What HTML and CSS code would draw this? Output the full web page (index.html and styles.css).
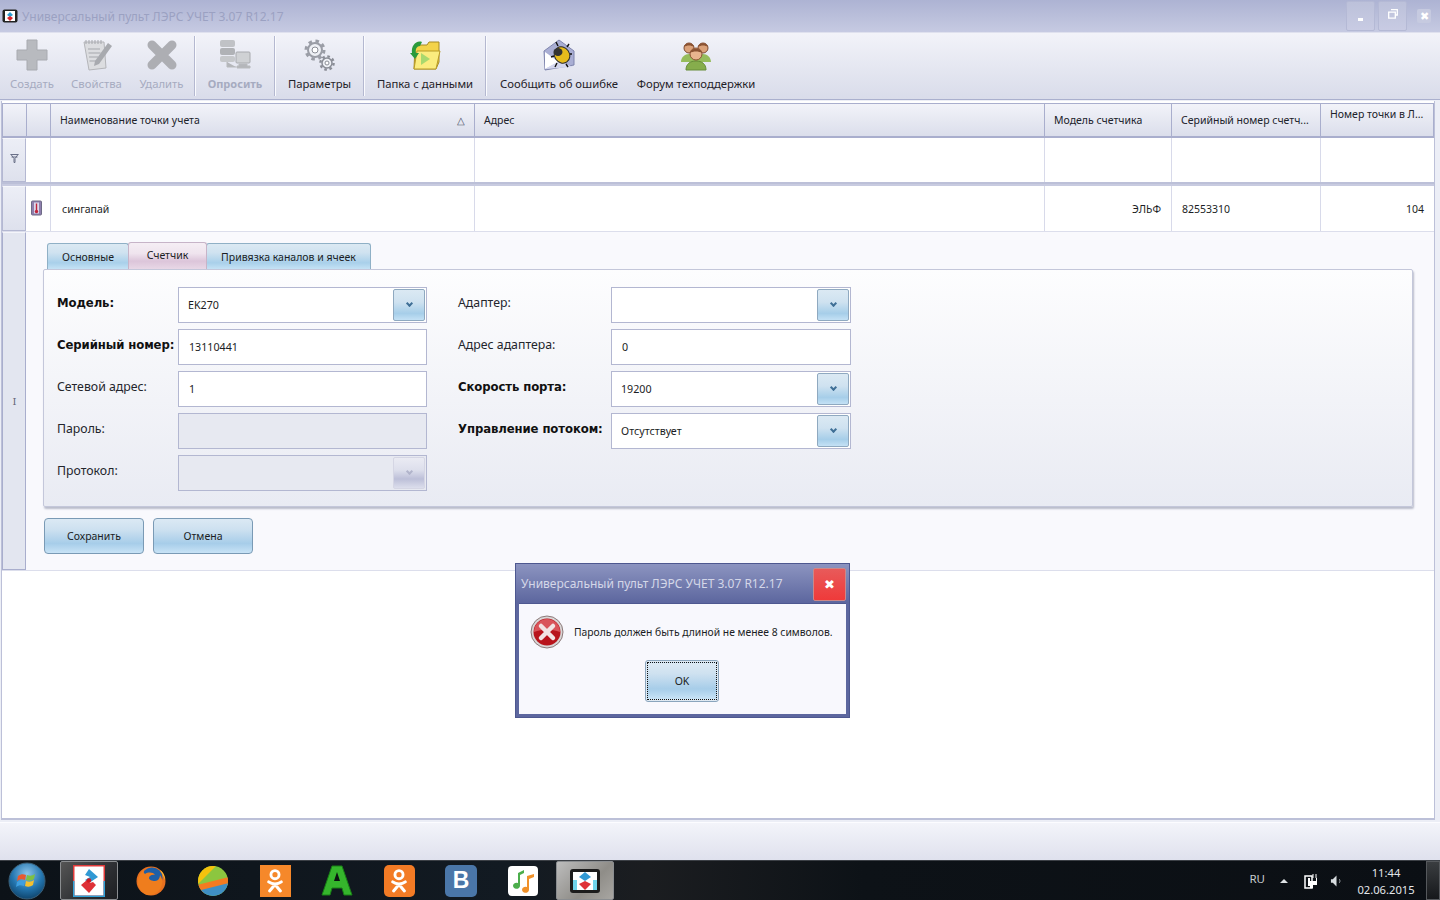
FILE: index.html
```html
<!DOCTYPE html>
<html lang="ru">
<head>
<meta charset="utf-8">
<title>Универсальный пульт ЛЭРС УЧЕТ 3.07 R12.17</title>
<link rel="stylesheet" href="styles.css">
</head>
<body>
<div class="window">
  <header class="titlebar">
    <svg class="app-ico" viewBox="0 0 16 14"><rect x=".5" y=".5" width="15" height="13" rx="2" fill="#222"/><rect x="3" y="2" width="10" height="10" fill="#fff"/><path d="M8 3l3 3-3 2-3-2z" fill="#2b9bd0"/><path d="M8 7l3 2-3 3-3-3z" fill="#d8232a"/></svg>
    <span class="title-text">Универсальный пульт ЛЭРС УЧЕТ 3.07 R12.17</span>
    <div class="win-btns">
      <div class="win-btn"><span class="min-mark"></span></div>
      <div class="win-btn"><svg class="restore" viewBox="0 0 10 10"><path d="M3 .7h6.3V6H7.5M.7 3.2h6.6v6H.7z" fill="none" stroke="#fff" stroke-width="1.3"/></svg></div>
      <div class="win-close">✖</div>
    </div>
  </header>

  <nav class="toolbar">
    <div class="tool off">
      <svg class="tool-ico" viewBox="0 0 32 32"><path d="M11 1h10v10h10v10H21v10H11V21H1V11h10z" fill="#b8babf" stroke="#a8aab0" stroke-linejoin="round"/></svg>
      <span>Создать</span>
    </div>
    <div class="tool off">
      <svg class="tool-ico" viewBox="0 0 32 32"><path d="M3 3l20 0 2 26-17 2z" fill="#dcdde0" stroke="#b4b5b9"/><path d="M5 1v4M8 1v4M11 1v4M14 1v4M17 1v4M20 1v4M7 10h12M7.500 14h12M8 18h9M8.500 22h7" stroke="#a5a7ac"/><path d="M14 22L27 4l4 3-13 18-5 2z" fill="#a8aaaf"/></svg>
      <span>Свойства</span>
    </div>
    <div class="tool off">
      <svg class="tool-ico" viewBox="0 0 32 32"><path d="M6 6L26 26M26 6L6 26" stroke="#adaeb3" stroke-width="9" stroke-linecap="round"/></svg>
      <span>Удалить</span>
    </div>
    <div class="tool-sep"></div>
    <div class="tool off wide-bold">
      <svg class="tool-ico" viewBox="0 0 32 32"><rect x="1" y="1" width="15" height="7" rx="2" fill="#c0c2c6"/><rect x="1" y="9" width="15" height="7" rx="2" fill="#b0b2b6"/><rect x="1" y="17" width="15" height="6" rx="2" fill="#c6c8cb"/><rect x="17" y="13" width="14" height="11" rx="1" fill="#cfd1d4" stroke="#a8aaae"/><path d="M20 25h8v2h3v2H18v-2h2zM8 23v5h9" fill="#b4b6ba" stroke="#b8babd"/></svg>
      <span>Опросить</span>
    </div>
    <div class="tool-sep"></div>
    <div class="tool">
      <svg class="tool-ico" viewBox="0 0 32 32"><circle cx="11" cy="11" r="7" fill="#eef0f5" stroke="#9a9da6" stroke-width="2"/><circle cx="11" cy="11" r="9" fill="none" stroke="#9a9da6" stroke-width="3" stroke-dasharray="3.5 3.6"/><circle cx="11" cy="11" r="3" fill="#fff" stroke="#8a8d96"/><circle cx="23" cy="24" r="5" fill="#eef0f5" stroke="#8a8d96" stroke-width="1.5"/><circle cx="23" cy="24" r="6.600" fill="none" stroke="#8a8d96" stroke-width="2.400" stroke-dasharray="2.600 2.600"/><circle cx="23" cy="24" r="2" fill="#fff" stroke="#8a8d96"/></svg>
      <span>Параметры</span>
    </div>
    <div class="tool-sep"></div>
    <div class="tool">
      <svg class="tool-ico" viewBox="0 0 32 32"><path d="M6 6h12l2-3h10v20l-3 7H5z" fill="#f3d34a" stroke="#a58a24"/><path d="M8 12h23l-4 18H5z" fill="#fbec7e" stroke="#b89a26"/><path d="M12 14l9 6-9 6z" fill="#a8d86e"/><path d="M3 14C2 7 7 1 13 3l-2 4c-3 0-5 3-4 7l3 0-4 6-5-6z" fill="#2a9a3c"/></svg>
      <span>Папка с данными</span>
    </div>
    <div class="tool-sep"></div>
    <div class="tool">
      <svg class="tool-ico" viewBox="0 0 32 32"><path d="M1 12L16 1l15 11v14L2 31z" fill="#a9aed4" stroke="#7f85ad"/><path d="M2 13l14 10L2 30z" fill="#fff"/><path d="M2 30l14-8 14 6z" fill="#d4d7ee"/><ellipse cx="19" cy="16" rx="7.500" ry="8.500" fill="#e6bb1c" stroke="#2b2b2b" transform="rotate(-35 19 16)"/><ellipse cx="15" cy="13" rx="4.500" ry="4" fill="#333"/><path d="M15 7l-2-4M24 8l2-3M11 17l-3 1M27 15h2M14 24l-2 4M23 25l2 3" stroke="#111" stroke-width="1.400"/></svg>
      <span>Сообщить об ошибке</span>
    </div>
    <div class="tool">
      <svg class="tool-ico" viewBox="0 0 32 32"><circle cx="9" cy="9" r="5" fill="#dba27a" stroke="#7d4a30"/><path d="M4 8c1-5 9-5 10 0-3-2-7-2-10 0z" fill="#8a5232"/><circle cx="23" cy="9" r="5" fill="#dba27a" stroke="#7d4a30"/><path d="M18 8c1-5 9-5 10 0-3-2-7-2-10 0z" fill="#8a5232"/><path d="M1 23c0-5 4-8 8-8s8 3 8 8zM15 23c0-5 4-8 8-8s8 3 8 8z" fill="#96bc5c"/><path d="M6 31c0-6 4-9 10-9s10 3 10 9z" fill="#86ad4c" stroke="#668c38"/><circle cx="16" cy="15" r="6" fill="#e8b48e" stroke="#8a5232"/><path d="M10 14c1-6 11-6 12 0-3-2-9-2-12 0z" fill="#8a5232"/></svg>
      <span>Форум техподдержки</span>
    </div>
  </nav>

  <main class="grid-wrap">
    <div class="row head-row">
      <div class="hcell"></div>
      <div class="hcell"></div>
      <div class="hcell sortable">Наименование точки учета<span class="sort-tri">△</span></div>
      <div class="hcell">Адрес</div>
      <div class="hcell">Модель счетчика</div>
      <div class="hcell">Серийный номер счетч...</div>
      <div class="hcell hcell-top">Номер точки в Л...</div>
    </div>
    <div class="row filter-row">
      <div class="side"><svg class="funnel" viewBox="0 0 9 9"><path d="M.5 .5h8M1 .5l3 4v4h1v-4l3-4M1.500 3h6" fill="none" stroke="#6a7088"/></svg></div>
      <div class="cell"></div><div class="cell"></div><div class="cell"></div><div class="cell"></div><div class="cell"></div><div class="cell"></div>
    </div>
    <div class="grid-sep"></div>
    <div class="row data-row">
      <div class="side"></div>
      <div class="cell thermo-cell"><svg class="thermo" viewBox="0 0 11 15"><rect x=".5" y=".5" width="10" height="14" rx="1" fill="#8e7fae" stroke="#6e6a86"/><rect x="3" y="2" width="5" height="11" fill="#dcd8ea"/><path d="M5.500 3v7" stroke="#c0243a" stroke-width="1.400"/><circle cx="5.500" cy="11" r="1.700" fill="#c0243a"/></svg></div>
      <div class="cell pad-name">сингапай</div>
      <div class="cell"></div>
      <div class="cell right">ЭЛЬФ</div>
      <div class="cell pad-serial">82553310</div>
      <div class="cell right">104</div>
    </div>
    <div class="detail-row">
      <div class="detail-side"><span class="cursor-i">I</span></div>
      <div class="detail">
        <div class="tabs">
          <div class="tab tab-a">Основные</div>
          <div class="tab tab-b active">Счетчик</div>
          <div class="tab tab-c">Привязка каналов и ячеек</div>
        </div>
        <div class="panel">
          <div class="form-col col-left">
            <div class="frow"><label class="strong">Модель:</label><div class="field combo"><span class="val val-combo">EK270</span><span class="drop"><i></i></span></div></div>
            <div class="frow"><label class="strong">Серийный номер:</label><div class="field"><span class="val">13110441</span></div></div>
            <div class="frow"><label>Сетевой адрес:</label><div class="field"><span class="val">1</span></div></div>
            <div class="frow"><label>Пароль:</label><div class="field disabled"></div></div>
            <div class="frow"><label>Протокол:</label><div class="field combo disabled"><span class="drop"><i></i></span></div></div>
          </div>
          <div class="form-col col-right">
            <div class="frow"><label>Адаптер:</label><div class="field combo"><span class="drop"><i></i></span></div></div>
            <div class="frow"><label>Адрес адаптера:</label><div class="field"><span class="val">0</span></div></div>
            <div class="frow"><label class="strong">Скорость порта:</label><div class="field combo"><span class="val val-combo">19200</span><span class="drop"><i></i></span></div></div>
            <div class="frow"><label class="strong">Управление потоком:</label><div class="field combo"><span class="val val-combo">Отсутствует</span><span class="drop"><i></i></span></div></div>
          </div>
        </div>
        <div class="actions">
          <div class="btn">Сохранить</div>
          <div class="btn">Отмена</div>
        </div>
      </div>
    </div>
  </main>
  <div class="statusbar"></div>
</div>

<section class="dialog">
  <div class="dlg-title"><span>Универсальный пульт ЛЭРС УЧЕТ 3.07 R12.17</span><div class="dlg-close">✖</div></div>
  <div class="dlg-body">
    <div class="dlg-msg">
      <svg class="err-ico" viewBox="0 0 34 34"><circle cx="17" cy="17" r="16" fill="#d9d6d6" stroke="#8c7a7a"/><circle cx="17" cy="17" r="13.500" fill="#b8141c"/><path d="M4 17a13 13 0 0 1 26 0c-8-3-18-3-26 0z" fill="#d9545a"/><path d="M11 11L23 23M23 11L11 23" stroke="#f1e4e4" stroke-width="4.500" stroke-linecap="round"/></svg>
      <span>Пароль должен быть длиной не менее 8 символов.</span>
    </div>
    <div class="dlg-ok"><div class="ok-inner">OK</div></div>
  </div>
</section>

<footer class="taskbar">
  <svg class="orb" viewBox="0 0 38 38"><defs><radialGradient id="orbg" cx="50%" cy="30%" r="75%"><stop offset="0" stop-color="#8cc4ea"/><stop offset=".55" stop-color="#2476b0"/><stop offset="1" stop-color="#0c3d62"/></radialGradient></defs><circle cx="19" cy="19" r="18" fill="url(#orbg)" stroke="#3a5f78"/><path d="M10 14c3-2 5-2 8-1l-1 5c-3-1-5-1-8 1z" fill="#e9582f"/><path d="M19 13c3 1 5 1 8-1l-1 5c-3 2-5 2-8 1z" fill="#7ec043"/><path d="M9 20c3-2 5-2 8-1l-1 5c-3-1-5-1-8 1z" fill="#3f9fe0"/><path d="M18 19c3 1 5 1 8-1l-1 5c-3 2-5 2-8 1z" fill="#f5c02f"/></svg>
  <div class="slot pinned-active">
    <svg class="tb-ico" viewBox="0 0 32 32"><rect x=".75" y=".75" width="30.500" height="30.500" fill="#fff" stroke="#e23a3a" stroke-width="1.500"/><path d="M.75 16v15.250h30.500V16" fill="none" stroke="#2fa3d8" stroke-width="1.500"/><path d="M16 4l9 8-9 6-4-3 5-3-5-2z" fill="#3199d4"/><path d="M16 28L8 20l6-5 3 3 3-1 3 3z" fill="#de3137"/><circle cx="16" cy="15.500" r="2.300" fill="#d01a22"/></svg>
  </div>
  <div class="slot"><svg class="tb-ico" viewBox="0 0 32 32"><circle cx="16" cy="16" r="14.500" fill="#e8701f"/><circle cx="17" cy="13" r="10.500" fill="#1d5fa8"/><path d="M3 15c1-6 4-9 6-11-1 3 0 4 1 5 3-2 8-2 10 1-3-1-6 1-6 3s3 3 6 3c3 0 5-3 5-6 2 3 3 6 2 9-1 7-7 11-13 11C8 30 2 23 3 15z" fill="#ef7d1d"/><path d="M25 5c3 2 5 6 5 10-1-3-2-5-5-10z" fill="#f6c637"/></svg></div>
  <div class="slot"><svg class="tb-ico" viewBox="0 0 32 32"><defs><clipPath id="ballc"><circle cx="16" cy="16" r="15"/></clipPath></defs><g clip-path="url(#ballc)"><rect width="32" height="32" fill="#8cc63f"/><path d="M0 0h20L0 20z" fill="#f4c20d"/><path d="M0 20L32 12v8L0 30z" fill="#f47b20"/><path d="M0 26l32-8v14H0z" fill="#3f8fc4"/></g></svg></div>
  <div class="slot"><div class="ok-sq"><svg class="ok-glyph" viewBox="0 0 20 28"><circle cx="10" cy="7" r="4.500" fill="none" stroke="#fff" stroke-width="3.200"/><path d="M3 15c4 3 10 3 14 0M10 18l-6 7M10 18l6 7" fill="none" stroke="#fff" stroke-width="3.400" stroke-linecap="round"/></svg></div></div>
  <div class="slot"><svg class="tb-ico" viewBox="0 0 32 32"><path d="M11 1h10l10 29h-8l-2-7H11l-2 7H1z" fill="#35b52c" stroke="#188016"/><path d="M13 16h6l-3-9z" fill="#0a1310"/></svg></div>
  <div class="slot"><div class="ok-sq round"><svg class="ok-glyph" viewBox="0 0 20 28"><circle cx="10" cy="7" r="4.500" fill="none" stroke="#fff" stroke-width="3.200"/><path d="M3 15c4 3 10 3 14 0M10 18l-6 7M10 18l6 7" fill="none" stroke="#fff" stroke-width="3.400" stroke-linecap="round"/></svg></div></div>
  <div class="slot"><div class="vk-sq">В</div></div>
  <div class="slot"><svg class="tb-ico music" viewBox="0 0 30 30"><rect width="30" height="30" rx="4" fill="#fff"/><path d="M10 7l6-3v3l-4 2v11a3.500 3 0 1 1-2-3z" fill="#4cae4c"/><path d="M19 10l7-2v3l-5 2v11a3.500 3 0 1 1-2-3z" fill="#f0912a"/></svg></div>
  <div class="slot pinned-current">
    <svg class="tb-ico-s" viewBox="0 0 30 24"><rect width="30" height="24" rx="3" fill="#1c1c1c"/><rect x="3" y="3" width="24" height="18" fill="#fff"/><rect x="3" y="11" width="4" height="10" fill="#6fd3ea"/><rect x="23" y="11" width="4" height="10" fill="#6fd3ea"/><path d="M15 3l6 5-6 4-6-4z" fill="#3199d4"/><path d="M15 21l-6-6 6-3 6 3z" fill="#de3137"/></svg>
  </div>
  <div class="tray">
    <span class="lang">RU</span>
    <span class="tray-up"></span>
    <svg class="tray-ico" viewBox="0 0 14 16"><path d="M1 3h7v12H1z" fill="none" stroke="#fff" stroke-width="1.500"/><path d="M4 5h2v8H4zM6 8h6V5h1v7H9v3H6z" fill="#fff"/><path d="M9 1v4M12 1v4" stroke="#fff"/></svg>
    <svg class="tray-ico speaker" viewBox="0 0 14 14"><path d="M1 5h2l4-4v12l-4-4H1z" fill="#d8dde0"/><path d="M10 5c1 1 1 3 0 4" stroke="#9aa0a4" fill="none"/></svg>
    <div class="clock"><span>11:44</span><span>02.06.2015</span></div>
    <div class="show-desktop"></div>
  </div>
</footer>
</body>
</html>
```

FILE: styles.css
```css
* { box-sizing: border-box; }
html, body { margin: 0; padding: 0; }
body {
  width: 1440px;
  height: 900px;
  overflow: hidden;
  position: relative;
  background: #eceef6;
  font-family: "Noto Sans", "Open Sans", sans-serif;
  font-size: 10.500px;
  color: #1b1d24;
}
.window { height: 860px; display: flex; flex-direction: column; }

/* title bar */
.titlebar {
  height: 33px;
  flex: none;
  display: flex;
  align-items: center;
  padding-left: 2px;
  background: linear-gradient(#adb3d3, #c6cae2);
  border-bottom: 1px solid #dfe1ee;
}
.app-ico { width: 16px; height: 14px; margin-right: 4px; margin-top: -1px; }
.title-text { font-size: 12px; color: #9ba1c2; }
.win-btns { margin-left: auto; display: flex; align-items: flex-start; height: 33px; }
.win-btn {
  width: 29px; height: 30px; margin-right: 3px; margin-top: 1px;
  border: 1px solid #b4b9d5; border-radius: 2px;
  background: linear-gradient(#bcc1da, #c8cbe3);
  display: flex; align-items: center; justify-content: center;
}
.min-mark { width: 5px; height: 3px; background: #fff; margin-top: 8px; }
.restore { width: 10px; height: 10px; margin-top: -3px; }
.win-close {
  width: 14px; height: 14px; margin: 9px 9px 0 7px;
  background: #c6cae0; border-radius: 2px; color: #fff;
  font-size: 11px; line-height: 14px; text-align: center;
}

/* toolbar */
.toolbar {
  height: 67px;
  flex: none;
  display: grid;
  grid-template-columns: 64px 65px 65px 2px 78px 2px 87px 2px 120px 2px 144px 130px;
  background: linear-gradient(#f2f3f9, #d9dcea);
  border-bottom: 1px solid #aab0ce;
}
.tool { display: flex; flex-direction: column; align-items: center; font-size: 11.300px; color: #1f2128; white-space: nowrap; }
.tool span { margin-top: 4px; line-height: 17px; }
.tool-ico { width: 32px; height: 32px; margin-top: 6px; display: block; flex: none; }
.tool.off { color: #a6abc0; }
.wide-bold span { font-weight: 700; font-size: 11px; }
.tool-sep { margin: 3px 0; border-left: 1px solid #b4b8d0; border-right: 1px solid #fafbfe; }

/* data grid */
.grid-wrap {
  flex: 1;
  background: #fff;
  margin: 1px 5px 2px 1px;
  padding: 2px 0 0 0;
  border: 1px solid #bcc0d8;
  border-bottom-width: 2px;
  border-top: 0;
}
.row { display: grid; grid-template-columns: 24px 24px 424px 570px 127px 149px 114px; }
.head-row { height: 35px; }
.hcell {
  display: flex; align-items: center;
  padding: 0 0 0 9px;
  background: linear-gradient(#f2f3f9, #dbdeeb);
  border: 1px solid #a9aecd;
  border-right-width: 0;
  border-bottom-width: 2px;
  white-space: nowrap;
  color: #20222a;
}
.hcell:last-child { border-right-width: 1px; }
.hcell-top { align-items: flex-start; padding-top: 3px; }
.sortable { justify-content: space-between; padding-right: 9px; }
.sort-tri { color: #4a5068; font-size: 10px; }
.filter-row { height: 44px; }
.side {
  display: flex; align-items: center; justify-content: center;
  padding-left: 1px;
  background: linear-gradient(#eceef6, #dee1ed);
  border: 1px solid #b4b8d2;
  border-top-color: #f6f7fb;
}
.funnel { width: 9px; height: 9px; margin-top: -3px; }
.cell {
  border-left: 1px solid #d8daea;
  display: flex; align-items: center;
  white-space: nowrap;
}
.side + .cell { border-left: 0; }
.grid-sep { height: 4px; background: #fff; border-top: 2px solid #bcc0d8; border-bottom: 2px solid #c8cbe0; }
.data-row { height: 46px; border-bottom: 1px solid #dcdeec; }
.thermo-cell { padding-left: 5px; }
.thermo { width: 11px; height: 16px; margin-top: -1px; }
.pad-name { padding-left: 11px; }
.pad-serial { padding-left: 10px; }
.right { justify-content: flex-end; padding-right: 10px; }

/* detail row */
.detail-row { display: flex; height: 339px; border-bottom: 1px solid #dcdeec; }
.detail-side {
  width: 24px; flex: none;
  padding-left: 1px;
  background: #e3e6f0;
  border: 1px solid #a9aecd;
  border-top-color: #f4f5fa;
  display: flex; align-items: center; justify-content: center;
}
.cursor-i { font-family: "DejaVu Serif", serif; font-size: 10px; color: #667; }
.detail { flex: 1; background: #f9f9fd; padding: 10px 21px 0 17px; }
.tabs { display: flex; height: 27px; padding-left: 4px; align-items: flex-end; }
.tab {
  height: 26px;
  display: flex; align-items: center; justify-content: center;
  border: 1px solid #8fb0c6;
  border-bottom: 0;
  border-radius: 3px 3px 0 0;
  background: linear-gradient(#dbe9f3, #cfe2f0 35%, #a9d0ea 75%, #c5e2f5);
  margin-right: -1px;
}
.tab-a { width: 82px; }
.tab-b { width: 79px; }
.tab-c { width: 165px; }
.tab.active {
  height: 27px;
  padding-bottom: 2px;
  border-color: #c7b4c8;
  background: linear-gradient(#f5eef4, #efe4ee 40%, #dcc5da 70%, #e8d8e6);
  position: relative;
  z-index: 1;
}
.panel {
  height: 238px;
  display: flex;
  padding: 17px 0 0 13px;
  background: linear-gradient(#fdfdfe, #e9ebf3);
  border: 1px solid #c4c7da;
  border-radius: 2px;
  box-shadow: 1px 2px 2px #b9bccb;
}
.form-col { display: flex; flex-direction: column; gap: 6px; }
.col-left { --label-w: 121px; --field-w: 249px; margin-right: 31px; }
.col-right { --label-w: 153px; --field-w: 240px; }
.frow { display: flex; height: 36px; }
label {
  width: var(--label-w); flex: none;
  font-size: 12.300px; line-height: 16px; padding-top: 8px;
  white-space: nowrap;
  color: #23252c;
}
label.strong { font-family: "DejaVu Sans", sans-serif; font-weight: 700; font-size: 11.700px; letter-spacing: -.1px; color: #111; }
.field {
  width: var(--field-w); flex: none;
  position: relative;
  display: flex; align-items: center;
  background: #fff;
  border: 1px solid #b3b7d1;
}
.field.disabled { background: #e7e9f1; }
.val { padding: 0 0 1px 10px; font-size: 10.700px; }
.val-combo { padding-left: 9px; }
.drop {
  position: absolute; top: 1px; right: 1px;
  width: 32px; height: 32px;
  border: 1px solid #8fa9c0; border-radius: 2px;
  background: linear-gradient(#dbe9f3, #cfe2f0 40%, #a6cee9 78%, #c4e1f5);
  display: flex; align-items: center; justify-content: center;
}
.drop i {
  width: 5px; height: 5px; margin-top: -3px;
  border-right: 2px solid #3f6f96; border-bottom: 2px solid #3f6f96;
  transform: rotate(45deg);
}
.disabled .drop { border-color: #d5d6e4; background: linear-gradient(#eaebf3, #dddfec 40%, #bcbfd8 70%, #dcdeec); }
.disabled .drop i { border-color: #b1b4cb; }
.actions { display: flex; gap: 9px; margin: 11px 0 0 1px; }
.btn {
  width: 100px; height: 36px;
  display: flex; align-items: center; justify-content: center;
  border: 1px solid #7a9ab5; border-radius: 4px;
  background: linear-gradient(#dbe9f4, #cee1f0 30%, #a7cde9 72%, #c8e3f6);
}

.statusbar {
  height: 38px; flex: none;
  background: linear-gradient(#f3f4fa, #dfe1ed);
  border-top: 1px solid #fcfcff;
}

/* dialog */
.dialog {
  position: absolute; left: 515px; top: 563px;
  width: 335px; height: 155px;
  padding: 0 3px 3px;
  background: linear-gradient(#8c94c0, #5d679f 25%, #5d679f);
  border: 1px solid #4e5890;
  display: flex; flex-direction: column;
}
.dlg-title {
  height: 39px; flex: none;
  display: flex; align-items: center; justify-content: space-between;
  padding-left: 2px;
  color: #d4d7e8;
  font-size: 12px;
}
.dlg-close {
  width: 33px; height: 33px; margin-top: 1px;
  border: 1px solid #c88; border-radius: 2px;
  background: linear-gradient(#e85a5a, #ef3a3a);
  color: #fff; font-size: 13px; line-height: 30px; text-align: center;
}
.dlg-body { flex: 1; background: #f8f8fd; border-top: 1px solid #4e5890; }
.dlg-msg { display: flex; align-items: center; height: 56px; padding-left: 11px; white-space: nowrap; font-size: 10.350px; }
.err-ico { width: 34px; height: 34px; margin-right: 10px; flex: none; }
.dlg-ok {
  width: 74px; height: 42px; margin: 0 0 0 126px;
  border: 1px solid #8aa5bd; border-radius: 3px; padding: 1px;
  background: #dfe9f2;
}
.ok-inner {
  height: 100%;
  display: flex; align-items: center; justify-content: center;
  border: 1px dotted #111;
  background: linear-gradient(#dce9f4, #cee1f0 30%, #a7cde9 72%, #c8e3f6);
}

/* taskbar */
.taskbar {
  position: absolute; left: 0; right: 0; top: 860px; height: 40px;
  display: flex; align-items: center;
  padding-left: 8px;
  background: linear-gradient(90deg, #0c1218, #121a22 35%, #1b1d20 45%, #0d1217 60%, #0b0f14);
  border-top: 1px solid #3c4046;
}
.orb { width: 38px; height: 38px; margin-right: 12px; flex: none; }
.slot { width: 62px; height: 39px; flex: none; display: flex; align-items: center; justify-content: center; }
.pinned-active, .pinned-current {
  border-radius: 2px;
  margin: 0 2px; width: 58px;
  border: 1px solid #8a8d90;
}
.pinned-active { background: linear-gradient(135deg, #555 0%, #2d2f33 60%, #1d1f22); }
.pinned-current { background: linear-gradient(135deg, #bdbdbd, #8f8d88 60%, #a8a6a2); }
.tb-ico { width: 32px; height: 32px; }
.tb-ico.music { width: 30px; height: 30px; }
.tb-ico-s { width: 30px; height: 24px; }
.ok-sq {
  width: 31px; height: 32px; background: #f6882a;
  display: flex; align-items: center; justify-content: center;
}
.ok-sq.round { border-radius: 5px; background: #f37b25; }
.ok-glyph { width: 18px; height: 26px; }
.vk-sq {
  width: 32px; height: 32px; border-radius: 5px; background: #4a76a8; color: #fff;
  font-family: "Liberation Sans", sans-serif; font-weight: 700; font-size: 23px;
  display: flex; align-items: center; justify-content: center;
}
.tray { margin-left: auto; display: flex; align-items: center; height: 39px; }
.lang { color: #c8ccd0; font-size: 11.500px; margin-right: 15px; margin-top: -4px; }
.tray-up {
  width: 0; height: 0; margin-right: 16px;
  border-left: 4px solid transparent; border-right: 4px solid transparent;
  border-bottom: 4px solid #dfe3e6;
}
.tray-ico { width: 14px; height: 16px; margin-right: 12px; }
.tray-ico.speaker { margin-right: 15px; width: 13px; height: 14px; }
.clock { display: flex; flex-direction: column; align-items: center; width: 56px; color: #e4e7ea; font-size: 11.200px; line-height: 17px; }
.show-desktop { width: 14px; height: 39px; margin-left: 12px; border: 1px solid #55585c; background: linear-gradient(#3a3d40, #16181b); }
```
